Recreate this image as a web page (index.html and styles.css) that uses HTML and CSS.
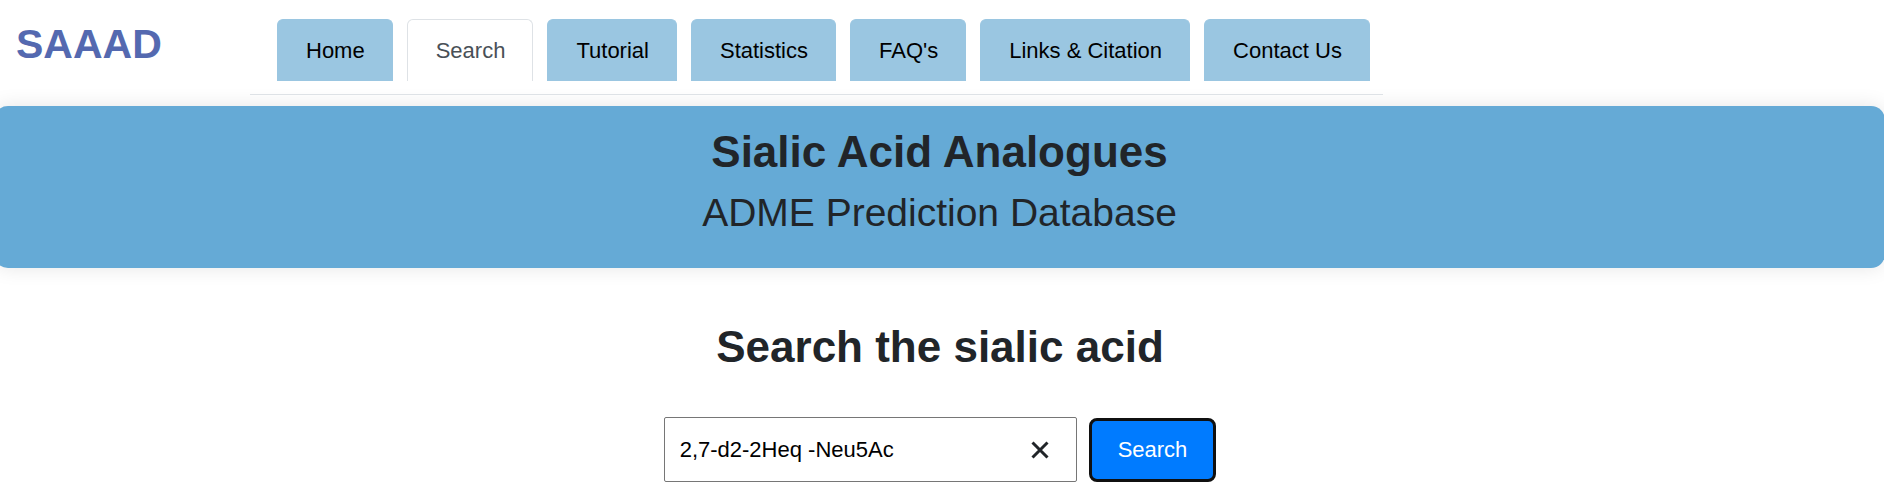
FILE: index.html
```html
<!DOCTYPE html>
<html lang="en">
<head>
<meta charset="utf-8">
<meta name="viewport" content="width=device-width, initial-scale=1">
<title>SAAAD - Search</title>
<link rel="stylesheet" href="styles.css">
</head>
<body>
<header class="header">
  <a class="brand" href="#">SAAAD</a>
  <nav class="tabs" aria-label="Main">
    <a class="tab" href="#">Home</a>
    <a class="tab tab-active" href="#" aria-current="page">Search</a>
    <a class="tab" href="#">Tutorial</a>
    <a class="tab" href="#">Statistics</a>
    <a class="tab" href="#">FAQ's</a>
    <a class="tab" href="#">Links &amp; Citation</a>
    <a class="tab" href="#">Contact Us</a>
  </nav>
</header>
<section class="banner">
  <h1 class="title">Sialic Acid Analogues</h1>
  <p class="subtitle">ADME Prediction Database</p>
</section>
<main class="main">
  <h2 class="heading" id="search-heading">Search the sialic acid</h2>
  <form class="search">
    <div class="field">
      <input class="input" type="text" value="2,7-d2-2Heq -Neu5Ac" aria-labelledby="search-heading">
      <button class="clear" type="button" aria-label="Clear">
        <svg width="18" height="18" viewBox="0 0 18 18" aria-hidden="true"><path d="M1.5 1.5 16.5 16.5M16.5 1.5 1.5 16.5" fill="none" stroke="currentColor" stroke-width="3"/></svg>
      </button>
    </div>
    <button class="submit" type="button">Search</button>
  </form>
</main>
</body>
</html>
```
FILE: styles.css
```css
* {
  box-sizing: border-box;
}

body {
  margin: 0;
  overflow-x: hidden;
  background: #fff;
  color: #212529;
  font-family: "Liberation Sans", Arial, sans-serif;
  font-size: 22px;
  line-height: 32px;
}

.header {
  display: flex;
  align-items: flex-start;
  padding-bottom: 11px;
}

.brand {
  flex: 0 0 250px;
  padding: 19px 16px 0;
  color: #5469b0;
  font-size: 41px;
  font-weight: 700;
  line-height: 50px;
  text-decoration: none;
}

.tabs {
  display: flex;
  gap: 14px;
  padding: 19px 13px 13px 27px;
  border-bottom: 1px solid #dee2e6;
}

.tab {
  padding: 14px 27px 14px 28px;
  border: 1px solid #9ac6e1;
  border-bottom-width: 0;
  border-radius: 6px 6px 0 0;
  background: #9ac6e1;
  color: #000;
  line-height: 33px;
  text-decoration: none;
  white-space: nowrap;
}

.tab-active {
  border-color: #dee2e6;
  background: #fff;
  color: #495057;
}

.banner {
  margin: 0 -1px 0 -6px;
  padding: 19px 0 32px;
  border-radius: 14px;
  background: #65aad6;
  box-shadow: 0 0 20px rgba(0, 0, 0, 0.1);
  text-align: center;
}

.title,
.subtitle,
.heading {
  margin: 0;
}

.title,
.heading {
  font-size: 44px;
  line-height: 53px;
}

.subtitle {
  margin-top: 11px;
  font-size: 39px;
  line-height: 47px;
}

.main {
  padding: 52px 4px 7px 0;
  text-align: center;
}

.search {
  display: flex;
  justify-content: center;
  align-items: center;
  gap: 12px;
  margin-top: 44px;
}

.field {
  position: relative;
  width: 413px;
}

.input {
  display: block;
  width: 100%;
  height: 65px;
  padding: 0 64px 0 15px;
  border: 1px solid #767676;
  border-radius: 2px;
  background: #fff;
  color: #000;
  font: inherit;
}

.clear {
  position: absolute;
  top: 0;
  right: 16px;
  display: flex;
  align-items: center;
  height: 100%;
  padding: 0 12px;
  border: 0;
  background: none;
  color: #212529;
}

.submit {
  padding: 13px 26px;
  border: 3px solid #101010;
  border-radius: 8px;
  background: #007bff;
  color: #fff;
  font: inherit;
}
```
